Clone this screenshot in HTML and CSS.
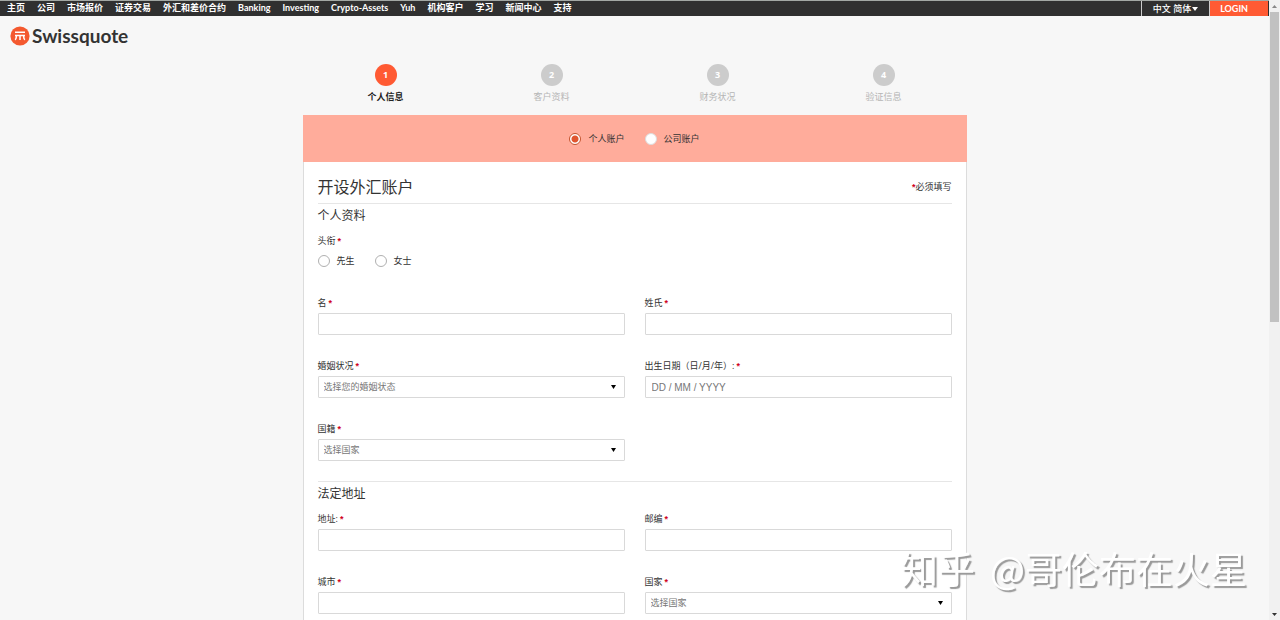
FILE: index.html
```
<!DOCTYPE html>
<html lang="zh-CN">
<head>
<meta charset="utf-8">
<title>开设外汇账户 - Swissquote</title>
<link rel="stylesheet" href="styles.css">
</head>
<body>
<div class="viewport">
  <div class="page">
    <header>
      <div class="topbar">
        <nav class="nav">
          <a href="#">主页</a><a href="#">公司</a><a href="#">市场报价</a><a href="#">证券交易</a><a href="#">外汇和差价合约</a><a href="#">Banking</a><a href="#">Investing</a><a href="#">Crypto-Assets</a><a href="#">Yuh</a><a href="#">机构客户</a><a href="#">学习</a><a href="#">新闻中心</a><a href="#">支持</a>
        </nav>
        <button class="lang" type="button">中文 简体<svg width="6" height="4" viewBox="0 0 6 4"><path d="M0 0h6L3 4z" fill="#fff"/></svg></button>
        <button class="login" type="button">LOGIN</button>
      </div>
      <a class="logo" href="#">
        <svg width="20" height="20" viewBox="0 0 20 20"><circle cx="10" cy="10" r="9.6" fill="#f4592f"/><path d="M5 6.2h10M5 9.4h10M6.3 9.4v1.4q0 2.4-1.3 3M13.700 9.400v1.400q0 2.400 1.300 3M10 9.400v4.600" fill="none" stroke="#fff" stroke-width="1.500"/></svg>
        <span>Swissquote</span>
      </a>
    </header>
    <main class="main">
      <ol class="steps">
        <li class="step active"><span class="num">1</span><span>个人信息</span></li>
        <li class="step"><span class="num">2</span><span>客户资料</span></li>
        <li class="step"><span class="num">3</span><span>财务状况</span></li>
        <li class="step"><span class="num">4</span><span>验证信息</span></li>
      </ol>
      <form class="card">
        <div class="banner">
          <label class="choice"><input type="radio" name="account" checked>个人账户</label>
          <label class="choice"><input type="radio" name="account">公司账户</label>
        </div>
        <div class="body">
          <div class="head"><h1>开设外汇账户</h1><p><b class="req">*</b>必须填写</p></div>
          <section>
            <h2>个人资料</h2>
            <div class="title-field">
              <div class="label">头衔<b class="req">*</b></div>
              <div class="choices">
                <label class="choice"><input type="radio" name="title">先生</label>
                <label class="choice"><input type="radio" name="title">女士</label>
              </div>
            </div>
            <div class="grid">
              <div class="field"><label class="label" for="first">名<b class="req">*</b></label><input class="box" id="first" type="text"></div>
              <div class="field"><label class="label" for="last">姓氏<b class="req">*</b></label><input class="box" id="last" type="text"></div>
              <div class="field"><label class="label" for="marital">婚姻状况<b class="req">*</b></label><div class="select"><select class="box" id="marital"><option>选择您的婚姻状态</option></select><svg width="5" height="4" viewBox="0 0 5 4"><path d="M0 0h5L2.500 4z"/></svg></div></div>
              <div class="field"><label class="label" for="birth">出生日期（日/月/年）:<b class="req">*</b></label><input class="box date" id="birth" type="text" placeholder="DD / MM / YYYY"></div>
              <div class="field"><label class="label" for="nation">国籍<b class="req">*</b></label><div class="select"><select class="box" id="nation"><option>选择国家</option></select><svg width="5" height="4" viewBox="0 0 5 4"><path d="M0 0h5L2.500 4z"/></svg></div></div>
            </div>
          </section>
          <section class="next">
            <h2>法定地址</h2>
            <div class="grid">
              <div class="field"><label class="label" for="address">地址:<b class="req">*</b></label><input class="box" id="address" type="text"></div>
              <div class="field"><label class="label" for="zip">邮编<b class="req">*</b></label><input class="box" id="zip" type="text"></div>
              <div class="field"><label class="label" for="city">城市<b class="req">*</b></label><input class="box" id="city" type="text"></div>
              <div class="field"><label class="label" for="country">国家<b class="req">*</b></label><div class="select"><select class="box" id="country"><option>选择国家</option></select><svg width="5" height="4" viewBox="0 0 5 4"><path d="M0 0h5L2.500 4z"/></svg></div></div>
            </div>
          </section>
        </div>
      </form>
    </main>
  </div>
  <div class="scrollbar">
    <svg width="5" height="3" viewBox="0 0 5 3"><path d="M0 3h5L2.500 0z" fill="#888"/></svg>
    <div class="track"><div class="thumb"></div></div>
    <svg width="5" height="3" viewBox="0 0 5 3"><path d="M0 0h5L2.500 3z" fill="#333"/></svg>
  </div>
</div>
<div class="watermark"><span>知乎</span><span>@哥伦布在火星</span></div>
</body>
</html>
```
FILE: styles.css
```
* { box-sizing: border-box; }
body {
  margin: 0;
  background: #f7f7f7;
  color: #333;
  font: 9px/14px "Open Sans", "Noto Sans CJK SC", sans-serif;
}
a { color: inherit; text-decoration: none; }
h1, h2, p, ol { margin: 0; padding: 0; font-weight: 400; }
button, input, select { font: inherit; color: inherit; }

.viewport { display: flex; height: 100vh; overflow: hidden; }
.page { flex: 1; min-width: 0; overflow: hidden; }

.topbar {
  display: flex;
  height: 16px;
  border-top: 1px solid #a3a8a4;
  background: #303030;
  color: #fff;
  padding-right: 1px;
  font-family: Lato, "Noto Sans CJK SC", sans-serif;
}
.nav { flex: 1; display: flex; gap: 12px; padding-left: 7px; font-weight: 700; white-space: nowrap; }
.lang, .login { border: 0; border-left: 1px solid #ccc; padding: 0 11px; line-height: 14px; white-space: nowrap; }
.lang { display: flex; align-items: center; gap: 1px; background: #303030; font-weight: 500; }
.login { background: #ff5a33; font-weight: 700; padding: 0 20px 0 10px; }

.logo { display: inline-flex; align-items: center; gap: 2px; margin: 8px 0 0 10px; height: 24px; color: #333; font: 700 19px/24px Lato, sans-serif; }

.main { max-width: 664px; margin: 0 auto; padding-top: 14px; }
.steps { display: grid; grid-template-columns: repeat(4, 1fr); list-style: none; padding-bottom: 11px; }
.step { display: flex; flex-direction: column; align-items: center; gap: 4px; color: #b5b5b5; }
.num { width: 22px; height: 22px; border-radius: 50%; background: #ccc; color: #fff; font-weight: 700; line-height: 22px; text-align: center; }
.active { color: #222; font-weight: 700; }
.active .num { background: #ff5a33; }

.banner { display: flex; justify-content: center; align-items: center; gap: 20px; height: 47px; background: #ffac9b; }
.choice { display: flex; align-items: center; gap: 7px; }
.choice input { appearance: none; width: 12px; height: 12px; margin: 0; border: 1px solid #b0b0b0; border-radius: 50%; background: #fff; }
.choice input:checked { border-color: #c4552f; background: radial-gradient(#e0552f 0 3px, #fff 4px); }
.banner .choice input:not(:checked) { border-color: #ddd; }
.body { padding: 13px 14px 40px; border: 1px solid #dcdcdc; border-top: 0; background: #fff; }
.head { display: flex; justify-content: space-between; align-items: center; padding-bottom: 4px; border-bottom: 1px solid #e6e6e6; }
h1 { font-size: 16px; line-height: 24px; }
h2 { font-size: 12px; line-height: 24px; margin-bottom: 6px; }
.req { color: #d0021b; margin-left: 2px; font-family: "Liberation Sans", Arial, sans-serif; }
.title-field { margin-bottom: 28px; }
.choices { display: flex; gap: 20px; padding-top: 6px; }
.label { display: block; }
.grid { display: grid; grid-template-columns: 1fr 1fr; gap: 24px 20px; }
.field { display: flex; flex-direction: column; gap: 3px; }
.box { display: block; width: 100%; height: 22px; margin: 0; padding: 0 5px; border: 1px solid #d9d9d9; border-radius: 1px; background: #fff; color: #777; appearance: none; }
.date { padding: 0 6px; font: 10px/14px "Liberation Sans", Arial, sans-serif; }
.date::placeholder { color: #777; }
.select { display: grid; align-items: center; }
.select > * { grid-area: 1 / 1; }
.select svg { justify-self: end; margin-right: 9px; pointer-events: none; }
.next { margin-top: 20px; border-top: 1px solid #e6e6e6; }

.scrollbar { display: flex; flex-direction: column; align-items: center; gap: 4px; width: 11px; padding: 5px 1px 4px; background: #f1f1f1; }
.track { flex: 1; width: 100%; }
.thumb { height: 52%; background: #c1c1c1; }

.watermark {
  position: fixed;
  right: 33px;
  bottom: 25px;
  display: flex;
  gap: 15px;
  color: #fff;
  font: 37px/54px "Noto Sans CJK SC", sans-serif;
  text-shadow: 2px 2px 1px #999;
  white-space: nowrap;
  pointer-events: none;
}
```
